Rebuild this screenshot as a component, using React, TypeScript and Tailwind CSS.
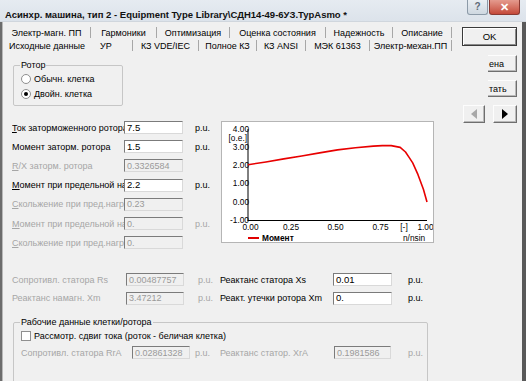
import type { ReactNode } from 'react'

const row1 = [
  { name: 'Электр-магн. ПП', w: 'w-[87px]' },
  { name: 'Гармоники', w: 'w-[65px]' },
  { name: 'Оптимизация', w: 'w-[72px]' },
  { name: 'Оценка состояния', w: 'w-[95px]' },
  { name: 'Надежность', w: 'w-[66px]' },
  { name: 'Описание', w: 'w-[58px]' },
]

const row2 = [
  { name: 'КЗ VDE/IEC', w: 'w-[65px]' },
  { name: 'Полное КЗ', w: 'w-[57px]' },
  { name: 'КЗ ANSI', w: 'w-[48px]' },
  { name: 'МЭК 61363', w: 'w-[63px]' },
  { name: 'Электр-механ.ПП', w: 'w-[81px]' },
]

type FieldRow = { label: ReactNode; value: string; unit: boolean; enabled: boolean }

const fields: FieldRow[] = [
  { label: <><u>Т</u>ок заторможенного ротора</>, value: '7.5', unit: true, enabled: true },
  { label: 'Момент заторм. ротора', value: '1.5', unit: true, enabled: true },
  { label: <><u>R</u>/X заторм. ротора</>, value: '0.3326584', unit: false, enabled: false },
  { label: <><u>М</u>омент при предельной нагрузке</>, value: '2.2', unit: true, enabled: true },
  { label: <><u>С</u>кольжение при пред.нагр</>, value: '0.23', unit: false, enabled: false },
  { label: <><u>М</u>омент при предельной нагрузке</>, value: '0.', unit: true, enabled: false },
  { label: <><u>С</u>кольжение при пред.нагр</>, value: '0.', unit: false, enabled: false },
]

function Sep() {
  return <span className="w-px h-[11px] bg-[#a7a7a7] shrink-0" />
}

function Input({ value, enabled, w }: { value: string; enabled: boolean; w: string }) {
  return (
    <div
      className={`${w} h-[13px] shrink-0 flex items-center pl-[2px] border border-t-[#7b7b7b] border-l-[#7b7b7b] border-r-[#d9d9d9] border-b-[#d9d9d9] ${
        enabled ? 'bg-white text-black text-[9.5px]' : 'bg-[#f0f0f0] text-[#9a9a9a]'
      }`}
    >
      {value}
    </div>
  )
}

function Btn({ children, className }: { children?: ReactNode; className: string }) {
  return (
    <div
      className={`${className} flex items-center border border-t-[#fdfdfd] border-l-[#fdfdfd] border-r-[#6e6e6e] border-b-[#6e6e6e] shadow-[inset_-1px_-1px_0_#b9b9b9] bg-[#f0f0f0]`}
    >
      {children}
    </div>
  )
}

function TorqueChart() {
  const pts: [number, number][] = [
    [0, 2.05], [0.1, 2.2], [0.2, 2.37], [0.3, 2.53], [0.4, 2.7], [0.5, 2.86],
    [0.6, 2.98], [0.7, 3.07], [0.75, 3.1], [0.8, 3.1], [0.85, 3.0], [0.88, 2.75],
    [0.9, 2.45], [0.92, 2.15], [0.95, 1.5], [0.98, 0.7], [1, 0],
  ]
  const X = (s: number) => 27 + 179 * s
  const Y = (t: number) => 81 - 18.2 * t
  const d = pts.map(([s, t], i) => `${i ? 'L' : 'M'}${X(s).toFixed(1)},${Y(t).toFixed(1)}`).join(' ')
  const yTicks = ['4.00', '3.00', '2.00', '1.00', '0.00', '-1.00']
  const xTicks = [
    { l: '0.00', x: 29.5 },
    { l: '0.25', x: 70 },
    { l: '0.50', x: 114.5 },
    { l: '0.75', x: 159.5 },
    { l: '[-]', x: 183 },
    { l: '1.00', x: 204.5 },
  ]

  return (
    <div className="mt-[3px] w-[213px] h-[122px] shrink-0 border border-[#b5b5b5] bg-white">
      <svg width="211" height="120" viewBox="1 1 211 120" className="block">
        <g fontFamily="'Liberation Sans', Arial, sans-serif" fontSize="8.3" fill="#000">
          {yTicks.map((l, i) => (
            <text key={l} x="28" y={Y(4 - i) + 2.6} textAnchor="end">
              {l}
            </text>
          ))}
          <text x="26" y="19.5" textAnchor="end">[o.e.]</text>
          {xTicks.map((t) => (
            <text key={t.l} x={t.x} y="108.5" textAnchor="middle">
              {t.l}
            </text>
          ))}
          <text x="41" y="120" fontWeight="bold">Момент</text>
          <text x="182" y="120">n/nsin</text>
        </g>
        <line x1="27" y1="8" x2="27" y2="99.5" stroke="#000" strokeWidth="1" />
        <line x1="26.5" y1="99.5" x2="206" y2="99.5" stroke="#000" strokeWidth="1" />
        <line x1="27" y1="117" x2="38" y2="117" stroke="#e00000" strokeWidth="2" />
        <path d={d} fill="none" stroke="#e80000" strokeWidth="1.6" strokeLinejoin="round" />
      </svg>
    </div>
  )
}

export default function App() {
  return (
    <div className="w-[526px] h-[381px] overflow-hidden bg-[#f0f0f0] flex flex-col font-['Liberation_Sans',Arial,sans-serif] text-[9px] text-black leading-[12px]">
      {/* Title bar */}
      <div className="h-[22px] shrink-0 flex items-start bg-gradient-to-b from-[#e6ebf1] to-[#dce3eb] border-b border-[#d0d6dd]">
        <span className="pl-[5px] pt-[9px] font-bold text-[9.5px] leading-[12px] text-[#111] whitespace-nowrap">
          Асинхр. машина, тип 2 - Equipment Type Library\СДН14-49-6УЗ.TypAsmo *
        </span>
        <div className="ml-auto flex">
          <div className="w-[21px] h-[15px] flex items-center justify-center rounded-b-[3px] border border-t-0 border-[#8c9aa8] bg-gradient-to-b from-[#e9eef3] to-[#cfd8e1] text-[#5d6b78] text-[10px] font-bold">
            ?
          </div>
          <div className="ml-[1px] w-[31px] h-[15px] flex items-center justify-center rounded-b-[3px] border border-t-0 border-[#8a3a33] bg-gradient-to-b from-[#e49a8e] to-[#c4493a] text-white text-[11px] font-bold">
            ✕
          </div>
          <div className="w-[6px]" />
        </div>
      </div>

      <div className="flex flex-1 min-h-0">
        <div className="w-[3px] shrink-0 bg-[#6c6c6c] border-r border-[#b8b8b8]" />

        {/* Tab control */}
        <div className="w-[457px] shrink-0 flex flex-col">
          <div className="pt-[4px]">
            <div className="h-[13px] flex items-center">
              {row1.map((t) => (
                <div key={t.name} className="flex items-center">
                  <div className={`${t.w} flex justify-center whitespace-nowrap`}>{t.name}</div>
                  <Sep />
                </div>
              ))}
            </div>
            <div className="h-[13px] flex items-center">
              <div className="w-[88px] flex justify-center whitespace-nowrap">Исходные данные</div>
              <div className="w-[41px] pl-[9px] whitespace-nowrap">УР</div>
              <Sep />
              {row2.map((t) => (
                <div key={t.name} className="flex items-center">
                  <div className={`${t.w} flex justify-center whitespace-nowrap`}>{t.name}</div>
                  <Sep />
                </div>
              ))}
            </div>
          </div>

          {/* Page */}
          <div className="pl-[10px]">
            <fieldset className="mt-[7px] w-[110px] border border-[#c6c6c6] rounded-[2px] pl-[7px] pb-[4px]">
              <legend className="ml-[-1px] px-[1px] leading-[12px]">Ротор</legend>
              <div className="h-[15px] flex items-center gap-[3px]">
                <span className="w-[10px] h-[10px] rounded-full border border-[#8f8f8f] bg-white" />
                <span>Обычн. клетка</span>
              </div>
              <div className="h-[15px] flex items-center gap-[3px]">
                <span className="w-[10px] h-[10px] rounded-full border border-[#8f8f8f] bg-white flex items-center justify-center">
                  <span className="w-[4px] h-[4px] rounded-full bg-black" />
                </span>
                <span>Двойн. клетка</span>
              </div>
            </fieldset>

            <div className="mt-[12px] flex items-start">
              <div className="w-[209px] shrink-0 flex flex-col ml-[-1px]">
                {fields.map((f, i) => (
                  <div key={i} className="h-[19.2px] flex items-center">
                    <div
                      className={`w-[112px] shrink-0 overflow-hidden whitespace-nowrap ${
                        f.enabled ? 'text-black' : 'text-[#a6a6a6]'
                      }`}
                    >
                      {f.label}
                    </div>
                    <Input value={f.value} enabled={f.enabled} w="w-[59px]" />
                    {f.unit && (
                      <span className={`ml-[12px] ${f.enabled ? 'text-black' : 'text-[#a6a6a6]'}`}>p.u.</span>
                    )}
                  </div>
                ))}
              </div>
              <TorqueChart />
            </div>

            <div className="mt-[18px] flex flex-col ml-[-1px]">
              {[
                { l: 'Сопротивл. статора Rs', v: '0.00487757', r: 'Реактанс статора Xs', rv: '0.01' },
                { l: 'Реактанс намагн. Xm', v: '3.47212', r: 'Реакт. утечки ротора Xm', rv: '0.' },
              ].map((r) => (
                <div key={r.l} className="h-[18.5px] flex items-center">
                  <div className="w-[114px] shrink-0 whitespace-nowrap text-[#a6a6a6]">{r.l}</div>
                  <Input value={r.v} enabled={false} w="w-[58px]" />
                  <span className="ml-[14px] w-[22px] text-[#a6a6a6]">p.u.</span>
                  <div className="w-[113px] shrink-0 whitespace-nowrap">{r.r}</div>
                  <Input value={r.rv} enabled={true} w="w-[59px]" />
                  <span className="ml-[16px]">p.u.</span>
                </div>
              ))}
            </div>

            <fieldset className="mt-[9px] w-[415px] h-[90px] border border-[#c6c6c6] rounded-[2px] pl-[7px]">
              <legend className="ml-[-1px] px-[1px] leading-[12px]">Рабочие данные клетки/ротора</legend>
              <div className="h-[15px] flex items-center gap-[3px]">
                <span className="w-[10px] h-[10px] border border-[#8f8f8f] bg-white" />
                <span>Рассмотр. сдвиг тока (роток - беличая клетка)</span>
              </div>
              <div className="h-[19px] flex items-center">
                <div className="w-[111px] shrink-0 whitespace-nowrap text-[#a6a6a6]">Сопротивл. статора RrA</div>
                <Input value="0.02861328" enabled={false} w="w-[58px]" />
                <span className="ml-[5px] w-[25px] text-[#a6a6a6]">p.u.</span>
                <div className="w-[114px] shrink-0 whitespace-nowrap text-[#a6a6a6]">Реактанс статор. XrA</div>
                <Input value="0.1981586" enabled={false} w="w-[57px]" />
                <span className="ml-[17px] text-[#a6a6a6]">p.u.</span>
              </div>
            </fieldset>
          </div>
        </div>

        {/* Right buttons */}
        <div className="flex-1 flex flex-col items-start">
          <div className="ml-[2px] mt-[5px] w-[55px] h-[19px] flex items-center justify-center border border-[#3a3a3a] bg-[#f0f0f0] shadow-[inset_1px_1px_0_#fff,inset_-1px_-1px_0_#8a8a8a] text-[9.5px]">
            OK
          </div>
          <Btn className="ml-[28px] mt-[9px] w-[29px] h-[17px] pl-[1px] border-l-0 overflow-hidden whitespace-nowrap">ена</Btn>
          <Btn className="ml-[28px] mt-[8px] w-[29px] h-[17px] pl-[1px] border-l-0 overflow-hidden whitespace-nowrap">тать</Btn>
          <div className="mt-[8px] flex">
            <Btn className="ml-[3px] w-[22px] h-[18px] justify-center">
              <svg width="6" height="10" viewBox="0 0 6 10">
                <path d="M6 0 L0 5 L6 10 Z" fill="#a8a8a8" />
              </svg>
            </Btn>
            <Btn className="ml-[8px] w-[24px] h-[18px] justify-center">
              <svg width="6" height="10" viewBox="0 0 6 10">
                <path d="M0 0 L6 5 L0 10 Z" fill="#000" />
              </svg>
            </Btn>
          </div>
        </div>

        <div className="w-[4px] shrink-0 bg-[#595959]" />
      </div>
    </div>
  )
}
